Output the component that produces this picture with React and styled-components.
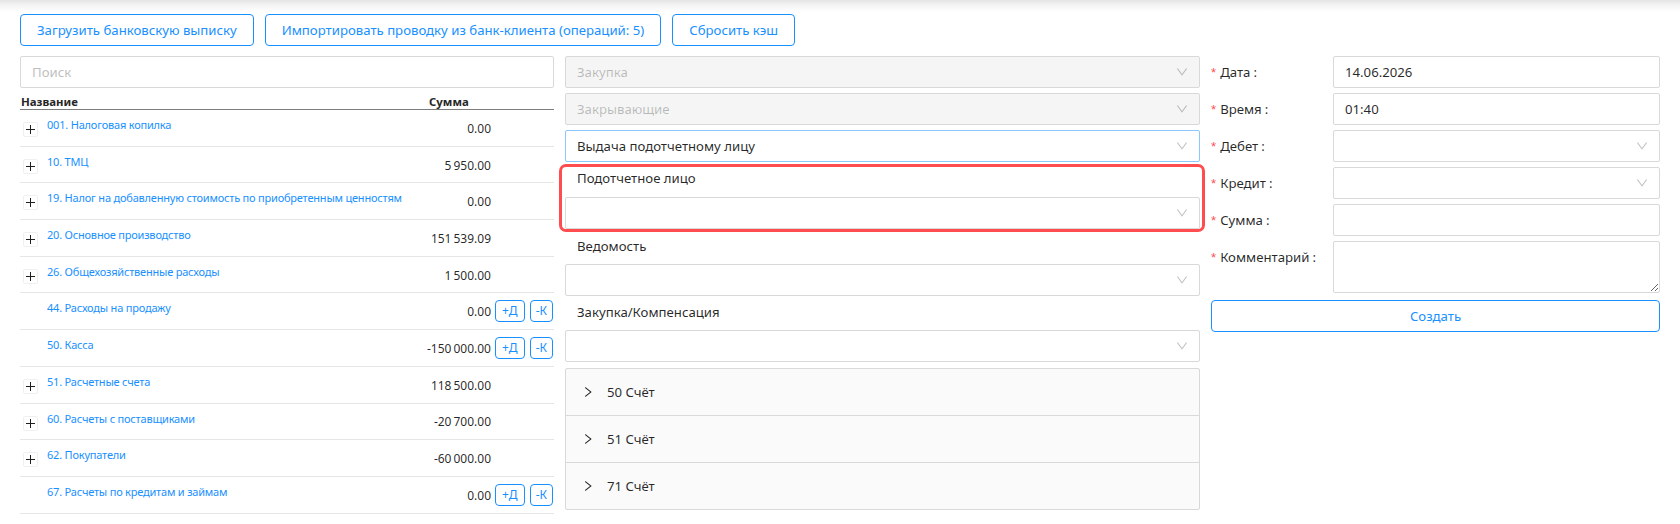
import React from 'react';
import styled, { createGlobalStyle } from 'styled-components';

const GlobalStyle = createGlobalStyle`
  html, body { margin: 0; padding: 0; background: #fff; }
  body {
    font-family: "Segoe UI", "Noto Sans", "Liberation Sans", sans-serif;
    font-size: 13.2px;
    color: rgba(0, 0, 0, 0.85);
  }
  * { box-sizing: border-box; }
`;

const Page = styled.div`
  width: 1680px;
  height: 524px;
  overflow: hidden;
  background: linear-gradient(to bottom, #e4e4e4 0px, #f3f3f3 5px, #ffffff 12px);
`;

const Toolbar = styled.div`
  display: flex;
  gap: 11px;
  padding: 14px 20px 0;
`;

const OutlineButton = styled.button`
  height: 32px;
  padding: 0 16px;
  border: 1px solid #1890ff;
  border-radius: 4px;
  background: #fff;
  color: #1890ff;
  font-family: inherit;
  font-size: 13.2px;
  white-space: nowrap;
  cursor: pointer;
  width: ${(p) => (p.$block ? '100%' : 'auto')};
`;

const Main = styled.div`
  display: grid;
  grid-template-columns: 534px 635px 449px;
  column-gap: 11px;
  align-items: start;
  padding: 0 20px;
  margin-top: 10px;
`;

const Column = styled.div`
  display: flex;
  flex-direction: column;
`;

const TextInput = styled.input`
  width: 100%;
  height: 32px;
  border: 1px solid #d9d9d9;
  border-radius: 2px;
  padding: 4px 11px;
  font-family: inherit;
  font-size: 13.2px;
  color: rgba(0, 0, 0, 0.85);
  background: #fff;
  outline: none;
  &::placeholder { color: #bfbfbf; }
`;

const TextArea = styled.textarea`
  width: 100%;
  height: 52px;
  border: 1px solid #d9d9d9;
  border-radius: 2px;
  padding: 4px 11px;
  font-family: inherit;
  font-size: 13.2px;
  resize: vertical;
  outline: none;
  display: block;
`;

/* ---------- table ---------- */
const TableHead = styled.div`
  display: flex;
  height: 22px;
  border-bottom: 1px solid #7d7d7d;
  font-size: 11.4px;
  font-weight: 700;
  color: #262626;
  line-height: 16px;
  padding-top: 6px;
`;

const HeadCell = styled.div`
  width: ${(p) => p.$w}px;
  padding-left: ${(p) => p.$pl || 0}px;
`;

const Row = styled.div`
  display: flex;
  align-items: center;
  height: 36.7px;
  border-bottom: 1px solid #e6e6e6;
`;

const NameCell = styled.div`
  width: 409px;
  align-self: stretch;
  display: flex;
  align-items: flex-start;
  padding-left: 3px;
`;

const ExpandBox = styled.span`
  position: relative;
  flex: none;
  width: 15px;
  height: 15px;
  margin-top: 12px;
  border: 1px solid #f0f0f0;
  border-radius: 2px;
  background: #fff;
  visibility: ${(p) => (p.$hidden ? 'hidden' : 'visible')};
  &::before, &::after {
    content: '';
    position: absolute;
    background: #1f1f1f;
  }
  &::before { left: 2px; right: 2px; top: 6px; height: 1px; }
  &::after { top: 2px; bottom: 2px; left: 6px; width: 1px; }
`;

const AccountLink = styled.a`
  margin-left: 9px;
  padding-top: 7px;
  font-size: 11px;
  letter-spacing: -0.2px;
  line-height: 16px;
  color: #1890ff;
  text-decoration: none;
  white-space: nowrap;
`;

const AmountCell = styled.div`
  width: 62px;
  text-align: right;
  white-space: nowrap;
  font-size: 12px;
  line-height: 16px;
  padding-top: 2px;
  direction: rtl;
`;

const Actions = styled.div`
  display: flex;
  gap: 5px;
  margin-left: 4px;
`;

const SmallButton = styled.button`
  height: 22px;
  padding: 0 ${(p) => p.$px}px;
  border: 1px solid #1890ff;
  border-radius: 4px;
  background: #fff;
  color: #1890ff;
  font-family: inherit;
  font-size: 12px;
  line-height: 20px;
  cursor: pointer;
`;

/* ---------- selects ---------- */
const SelectBox = styled.div`
  height: 32px;
  display: flex;
  align-items: center;
  justify-content: space-between;
  padding: 0 11px;
  border: 1px solid ${(p) => (p.$focused ? '#8cc8ff' : '#d9d9d9')};
  border-radius: 2px;
  background: ${(p) => (p.$disabled ? '#f5f5f5' : '#fff')};
  color: ${(p) => (p.$disabled ? 'rgba(0,0,0,0.25)' : 'rgba(0,0,0,0.85)')};
  font-size: 13.2px;
  white-space: nowrap;
`;

const ArrowIcon = styled.svg`
  width: 12px;
  height: 12px;
  flex: none;
  fill: rgba(0, 0, 0, 0.25);
`;

const SelectStack = styled.div`
  display: flex;
  flex-direction: column;
  gap: 5px;
`;

const Highlight = styled.div`
  margin: 2px -5px 0 -6px;
  padding: 0 2px 0 3px;
  border: 3px solid #ff4d4f;
  border-radius: 7px;
`;

const FieldLabel = styled.div`
  padding: ${(p) => (p.$tight ? '1px 12px 9px' : '4px 12px 8px')};
  line-height: 20px;
  font-size: 13.2px;
  color: rgba(0, 0, 0, 0.85);
`;

const FieldGroup = styled.div`
  margin-top: ${(p) => p.$mt || 0}px;
`;

const Collapse = styled.div`
  margin-top: 6px;
  border: 1px solid #d9d9d9;
  border-radius: 2px;
  background: #fafafa;
`;

const CollapseItem = styled.div`
  height: ${(p) => (p.$last ? 46 : 47)}px;
  display: flex;
  align-items: center;
  padding-left: 16px;
  border-bottom: ${(p) => (p.$last ? 'none' : '1px solid #d9d9d9')};
  font-size: 13.2px;
  color: rgba(0, 0, 0, 0.85);
`;

const ChevronIcon = styled.svg`
  width: 12px;
  height: 12px;
  margin-right: 13px;
  fill: rgba(0, 0, 0, 0.85);
`;

/* ---------- right form ---------- */
const FormRow = styled.div`
  display: flex;
  align-items: flex-start;
  margin-bottom: 5px;
`;

const FormLabel = styled.label`
  width: 122px;
  flex: none;
  height: 32px;
  display: flex;
  align-items: center;
  font-size: 13.2px;
  color: rgba(0, 0, 0, 0.85);
  white-space: nowrap;
`;

const Required = styled.span`
  color: #ff4d4f;
  margin-right: 4px;
  font-family: "Liberation Sans", sans-serif;
`;

const Colon = styled.span`
  margin-left: 3px;
`;

const FieldControl = styled.div`
  flex: 1;
  min-width: 0;
`;

const SubmitWrap = styled.div`
  margin-top: 2px;
`;

const DownArrow = () => (
  <ArrowIcon viewBox="64 64 896 896">
    <path d="M884 256h-75c-5.1 0-9.9 2.5-12.9 6.6L512 654.2 227.9 262.6c-3-4.1-7.8-6.6-12.9-6.6h-75c-6.5 0-10.3 7.4-6.5 12.1l352.6 486.1c12.8 17.6 39 17.6 51.7 0l352.6-486.1c3.9-4.7.1-12.1-6.4-12.1z" />
  </ArrowIcon>
);

const RightArrow = () => (
  <ChevronIcon viewBox="64 64 896 896">
    <path d="M765.7 486.8L314.9 134.7A7.97 7.97 0 00302 141v77.3c0 4.9 2.3 9.6 6.1 12.6l360 281.1-360 281.1c-3.9 3-6.1 7.7-6.1 12.6V883c0 6.7 7.7 10.4 12.9 6.3l450.8-352.1a31.96 31.96 0 000-50.4z" />
  </ChevronIcon>
);

const Select = ({ value, disabled, focused }) => (
  <SelectBox $disabled={disabled} $focused={focused}>
    <span>{value}</span>
    <DownArrow />
  </SelectBox>
);

const NB = '\u202f';

const accounts = [
  { name: '001. Налоговая копилка', sum: '0.00', expand: true },
  { name: '10. ТМЦ', sum: `5${NB}950.00`, expand: true },
  { name: '19. Налог на добавленную стоимость по приобретенным ценностям', sum: '0.00', expand: true },
  { name: '20. Основное производство', sum: `151${NB}539.09`, expand: true },
  { name: '26. Общехозяйственные расходы', sum: `1${NB}500.00`, expand: true },
  { name: '44. Расходы на продажу', sum: '0.00', actions: true },
  { name: '50. Касса', sum: `-150${NB}000.00`, actions: true },
  { name: '51. Расчетные счета', sum: `118${NB}500.00`, expand: true },
  { name: '60. Расчеты с поставщиками', sum: `-20${NB}700.00`, expand: true },
  { name: '62. Покупатели', sum: `-60${NB}000.00`, expand: true },
  { name: '67. Расчеты по кредитам и займам', sum: '0.00', actions: true },
];

const formFields = [
  { label: 'Дата', kind: 'input', value: '14.06.2026' },
  { label: 'Время', kind: 'input', value: '01:40' },
  { label: 'Дебет', kind: 'select' },
  { label: 'Кредит', kind: 'select' },
  { label: 'Сумма', kind: 'input', value: '' },
  { label: 'Комментарий', kind: 'textarea' },
];

export default function App() {
  return (
    <>
      <GlobalStyle />
      <Page>
        <Toolbar>
          <OutlineButton>Загрузить банковскую выписку</OutlineButton>
          <OutlineButton>Импортировать проводку из банк-клиента (операций: 5)</OutlineButton>
          <OutlineButton>Сбросить кэш</OutlineButton>
        </Toolbar>

        <Main>
          <Column>
            <TextInput placeholder="Поиск" />
            <TableHead>
              <HeadCell $w={409} $pl={1}>Название</HeadCell>
              <HeadCell $w={80}>Сумма</HeadCell>
            </TableHead>
            {accounts.map((a) => (
              <Row key={a.name}>
                <NameCell>
                  <ExpandBox $hidden={!a.expand} />
                  <AccountLink href="#">{a.name}</AccountLink>
                </NameCell>
                <AmountCell><bdi>{a.sum}</bdi></AmountCell>
                {a.actions && (
                  <Actions>
                    <SmallButton $px={6}>+Д</SmallButton>
                    <SmallButton $px={5}>-К</SmallButton>
                  </Actions>
                )}
              </Row>
            ))}
          </Column>

          <Column>
            <SelectStack>
              <Select value="Закупка" disabled />
              <Select value="Закрывающие" disabled />
              <Select value="Выдача подотчетному лицу" focused />
            </SelectStack>
            <Highlight>
              <FieldLabel $tight>Подотчетное лицо</FieldLabel>
              <Select value="" />
            </Highlight>
            <FieldGroup>
              <FieldLabel>Ведомость</FieldLabel>
              <Select value="" />
            </FieldGroup>
            <FieldGroup $mt={2}>
              <FieldLabel>Закупка/Компенсация</FieldLabel>
              <Select value="" />
            </FieldGroup>
            <Collapse>
              {['50 Счёт', '51 Счёт', '71 Счёт'].map((t, i) => (
                <CollapseItem key={t} $last={i === 2}>
                  <RightArrow />
                  {t}
                </CollapseItem>
              ))}
            </Collapse>
          </Column>

          <Column>
            {formFields.map((f) => (
              <FormRow key={f.label}>
                <FormLabel>
                  <Required>*</Required>
                  {f.label}
                  <Colon>:</Colon>
                </FormLabel>
                <FieldControl>
                  {f.kind === 'input' && <TextInput defaultValue={f.value} />}
                  {f.kind === 'select' && <Select value="" />}
                  {f.kind === 'textarea' && <TextArea />}
                </FieldControl>
              </FormRow>
            ))}
            <SubmitWrap>
              <OutlineButton $block>Создать</OutlineButton>
            </SubmitWrap>
          </Column>
        </Main>
      </Page>
    </>
  );
}
